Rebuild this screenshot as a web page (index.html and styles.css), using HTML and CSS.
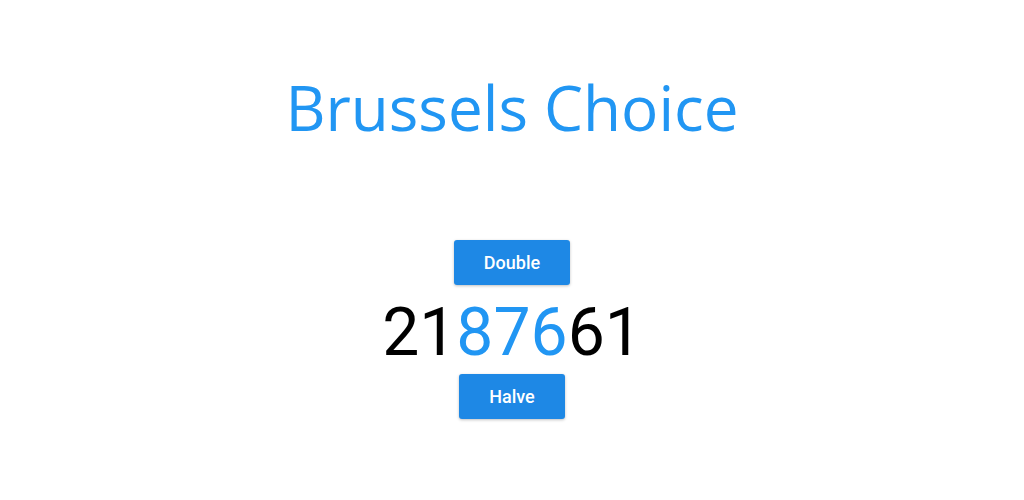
FILE: index.html
```html
<!DOCTYPE html>
<html>
<head>
<meta charset="utf-8">
<link rel="stylesheet" href="styles.css">
</head>
<body>
<main class="app">
  <h1 class="title">Brussels Choice</h1>
  <section class="counter">
    <button class="btn">Double</button>
    <div class="number"><span>21</span><span class="hl">876</span><span>61</span></div>
    <button class="btn">Halve</button>
  </section>
</main>
</body>
</html>
```
FILE: styles.css
```css
html, body { margin: 0; padding: 0; background: #fff; }
.app {
  display: flex;
  flex-direction: column;
  align-items: center;
  width: 1024px;
  height: 500px;
}
.title {
  margin: 67px 0 0;
  font-family: "Open Sans", sans-serif;
  font-weight: 400;
  font-size: 62px;
  line-height: 80px;
  color: #2196f3;
}
.counter {
  margin-top: 93px;
  display: flex;
  flex-direction: column;
  align-items: center;
}
.btn {
  font-family: Roboto, sans-serif;
  font-weight: 500;
  font-size: 18px;
  color: #fff;
  background: #1e88e5;
  border: none;
  border-radius: 3px;
  height: 45px;
  padding: 0 30px;
  box-shadow: 0 1px 3px rgba(0,0,0,0.25);
}
.number {
  font-family: Roboto, sans-serif;
  font-size: 66px;
  line-height: 66px;
  padding: 15px 0 8px;
  color: #000;
}
.hl { color: #2196f3; }
```
